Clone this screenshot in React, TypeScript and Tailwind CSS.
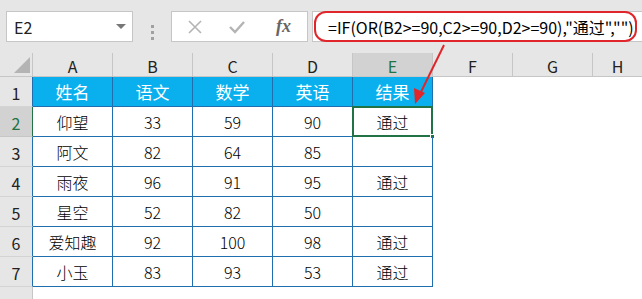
import React from "react";

const font = { fontFamily: '"Noto Sans CJK SC", "Liberation Sans", sans-serif' };

const rows = [
  ["仰望", "33", "59", "90", "通过"],
  ["阿文", "82", "64", "85", ""],
  ["雨夜", "96", "91", "95", "通过"],
  ["星空", "52", "82", "50", ""],
  ["爱知趣", "92", "100", "98", "通过"],
  ["小玉", "83", "93", "53", "通过"],
];
const heads = ["姓名", "语文", "数学", "英语", "结果"];
const letters = ["A", "B", "C", "D", "E", "F", "G", "H"];

function Toolbar() {
  return (
    <div className="flex h-[53px] bg-[#e6e6e6] pt-[11px]">
      <div className="ml-[6px] flex h-[31px] w-[127px] items-center justify-between border border-[#c6c6c6] bg-white pl-[7px] pr-[6px] text-[16px] text-[#222]">
        <span>E2</span>
        <svg width="10" height="6" viewBox="0 0 10 6">
          <path d="M0 0 L10 0 L5 5 Z" fill="#777" />
        </svg>
      </div>
      <div className="flex w-[38px] flex-col items-center justify-center gap-[3px]">
        <div className="h-[3px] w-[3px] bg-[#a0a0a0]" />
        <div className="h-[3px] w-[3px] bg-[#a0a0a0]" />
        <div className="h-[3px] w-[3px] bg-[#a0a0a0]" />
      </div>
      <div className="flex h-[31px] w-[137px] items-center border border-[#c6c6c6] bg-white">
        <svg className="ml-[15px]" width="16" height="16" viewBox="0 0 16 16">
          <path d="M2 2 L14 14 M14 2 L2 14" stroke="#b4b4b4" strokeWidth="1.6" />
        </svg>
        <svg className="ml-[26px]" width="16" height="16" viewBox="0 0 16 16">
          <path d="M1 8 L6 13 L15 3" stroke="#b4b4b4" strokeWidth="2.4" fill="none" />
        </svg>
        <span className="ml-[31px] text-[18px] font-bold italic text-[#666]" style={{ fontFamily: '"Liberation Serif", serif' }}>
          fx
        </span>
      </div>
      <div className="ml-[4px] flex h-[31px] flex-1 items-center border-y border-l border-[#c6c6c6] bg-white pl-[1px] pr-[5px]">
        <div className="flex h-[31px] flex-1 items-center overflow-hidden whitespace-nowrap rounded-[12px] border-2 border-[#e0262b] pl-[12px] text-[16px] text-black">
          =IF(OR(B2&gt;=90,C2&gt;=90,D2&gt;=90),"通过","")
        </div>
      </div>
    </div>
  );
}

function Sheet() {
  return (
    <div className="grid grid-cols-[33px_80px_80px_80px_80px_80px_80px_80px_1fr] grid-rows-[24px_repeat(7,30px)_1fr] bg-white">
      <div className="relative border-b border-r border-[#c6c6c6] bg-[#e6e6e6]">
        <svg className="absolute bottom-[3px] right-[2px]" width="16" height="16" viewBox="0 0 16 16">
          <path d="M16 0 L16 16 L0 16 Z" fill="#b4b4b4" />
        </svg>
      </div>
      {letters.map((l, i) => (
        <div
          key={l}
          className={
            "flex items-center justify-center border-b border-[#c6c6c6] text-[16px] leading-none " +
            (i === 4 ? "bg-[#d2d2d2] text-[#217346]" : "bg-[#e6e6e6] text-[#222]") +
            (i === 7 ? "" : " border-r")
          }
        >
          <span className="mt-[2px]">{l}</span>
        </div>
      ))}
      {[heads, ...rows].map((r, ri) => (
        <React.Fragment key={ri}>
          <div
            className={
              "flex items-end justify-center border-b border-r pb-[1px] text-[16px] " +
              (ri === 1
                ? "border-b-[#c6c6c6] border-r-[#217346] bg-[#d2d2d2] text-[#217346]"
                : "border-b-[#d4d4d4] border-r-[#1f6fae] bg-[#e6e6e6] text-[#222]")
            }
          >
            {ri + 1}
          </div>
          {r.map((c, ci) => (
            <div
              key={ci}
              className={
                "relative flex items-center justify-center border-b border-r border-[#1f6fae] " +
                (ri === 0 ? "bg-[#0ab0ee] text-[17px] text-white" : "text-[16px] font-light text-black")
              }
            >
              {ri === 1 && ci === 4 && (
                <>
                  <div className="absolute -left-[1px] -top-[1px] h-[31px] w-[81px] border-2 border-[#217346]" />
                  <div className="absolute -bottom-[3px] -right-[3px] h-[5px] w-[5px] border border-white bg-[#217346]" />
                </>
              )}
              {c}
            </div>
          ))}
          <div />
          <div />
          <div />
        </React.Fragment>
      ))}
      <div className="h-[12px] border-r border-[#c6c6c6] bg-[#e6e6e6]" />
    </div>
  );
}

export default function App() {
  return (
    <div className="relative h-[299px] w-[642px] overflow-hidden bg-white" style={font}>
      <Toolbar />
      <Sheet />
      <svg className="pointer-events-none absolute left-0 top-0" width="642" height="299">
        <line x1="444" y1="45" x2="420" y2="94" stroke="#e0262b" strokeWidth="2" />
        <path d="M415 104 L414 88 L425 93 Z" fill="#e0262b" />
      </svg>
    </div>
  );
}
